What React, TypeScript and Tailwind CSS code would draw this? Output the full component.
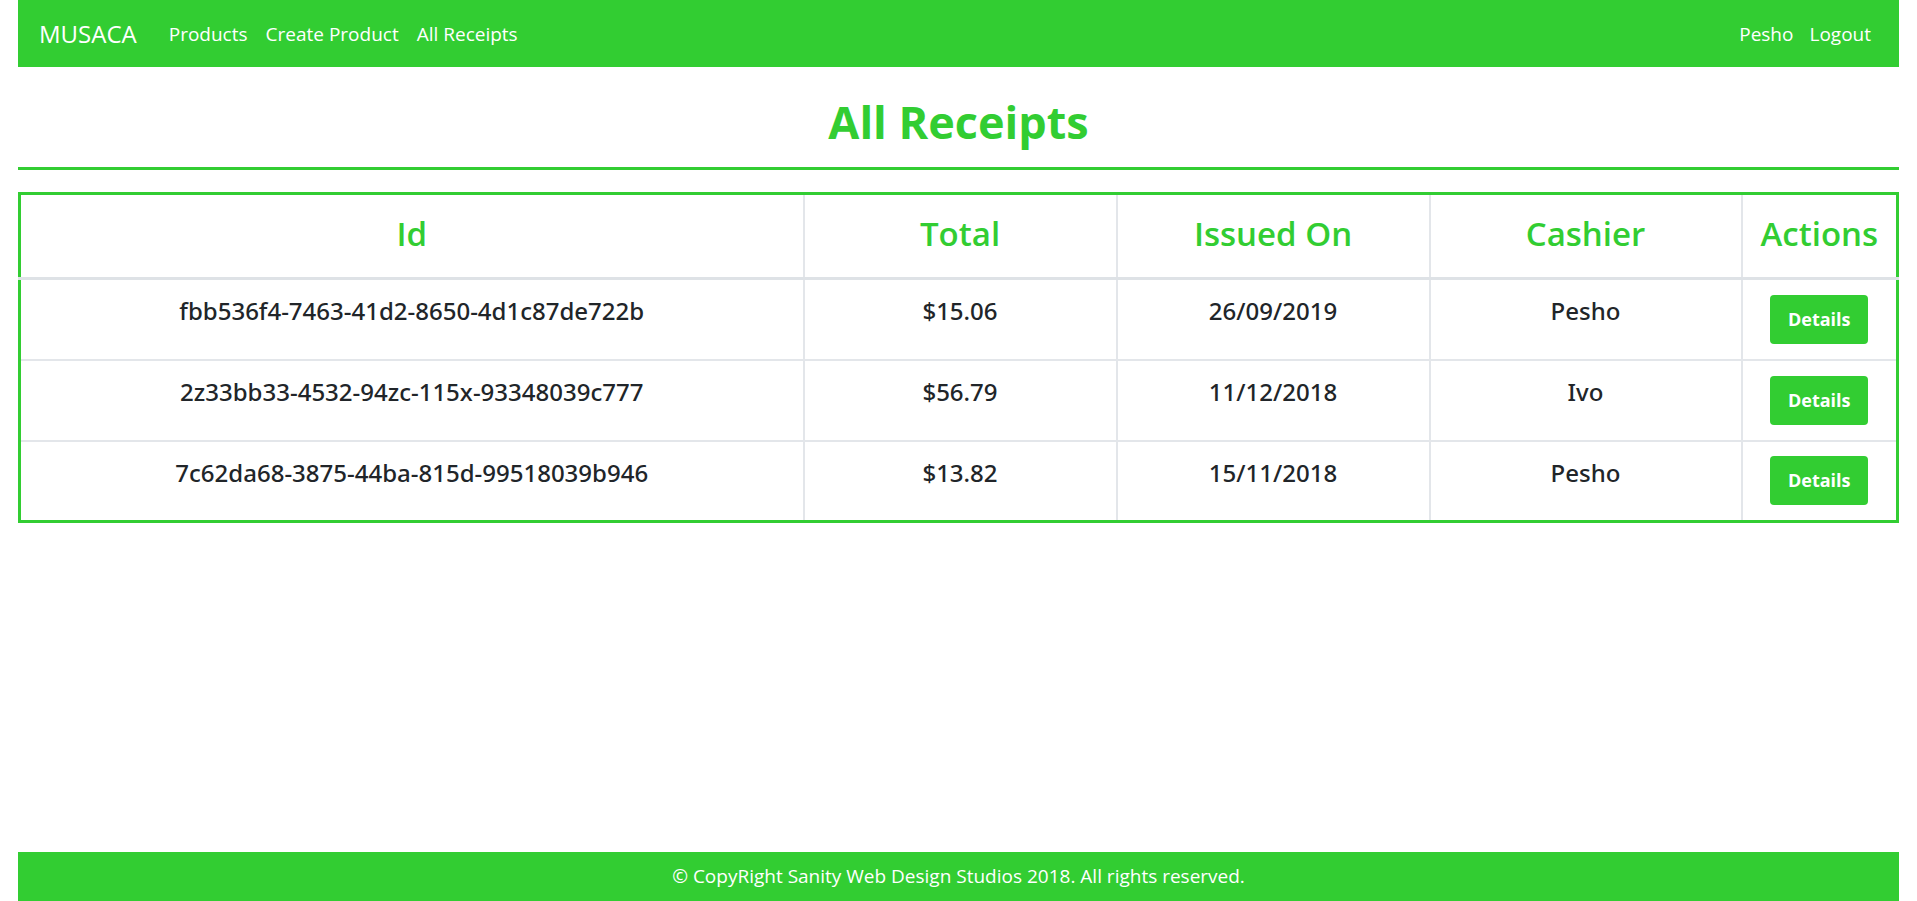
const receipts = [
  { id: "fbb536f4-7463-41d2-8650-4d1c87de722b", total: "$15.06", issuedOn: "26/09/2019", cashier: "Pesho" },
  { id: "2z33bb33-4532-94zc-115x-93348039c777", total: "$56.79", issuedOn: "11/12/2018", cashier: "Ivo" },
  { id: "7c62da68-3875-44ba-815d-99518039b946", total: "$13.82", issuedOn: "15/11/2018", cashier: "Pesho" },
];

function Navbar() {
  return (
    <nav className="h-[67px] bg-[#32cd32] flex items-center justify-between pl-[21px] pr-5 text-white">
      <div className="flex items-center pt-px">
        <a className="text-[24px] mr-[23px]">MUSACA</a>
        <a className="px-[9px] text-[19px]">Products</a>
        <a className="px-[9px] text-[19px]">Create Product</a>
        <a className="px-[9px] text-[19px]">All Receipts</a>
      </div>
      <div className="flex items-center pt-px">
        <a className="px-2 text-[19px]">Pesho</a>
        <a className="px-2 text-[19px]">Logout</a>
      </div>
    </nav>
  );
}

const cell = "text-center text-[24px] font-medium text-[#212529] pb-4 font-['Noto_Sans',sans-serif]";

export default function App() {
  return (
    <div
      className="min-h-screen flex flex-col pl-[18px] pr-[18px] bg-white"
      style={{ fontFamily: '"Open Sans", "Noto Sans", sans-serif' }}
    >
      <Navbar />
      <main className="flex-1">
        <h1 className="pt-[28px] pb-[18px] text-center text-[45px] leading-[54px] font-bold text-[#32cd32]">
          All Receipts
        </h1>
        <hr className="border-0 h-[3px] bg-[#32cd32]" />
        <table className="mt-[22px] w-full table-fixed border-collapse border-[3px] border-[#32cd32]">
          <thead>
            <tr className="h-[85px] border-b-[3px] border-[#dee2e6]">
              <th className="w-[784px] text-[33px] font-semibold text-[#32cd32] pb-1">Id</th>
              <th className="w-[313px] text-[33px] font-semibold text-[#32cd32] pb-1 border-l-2 border-[#e3e6ea]">Total</th>
              <th className="w-[313px] text-[33px] font-semibold text-[#32cd32] pb-1 border-l-2 border-[#e3e6ea]">Issued On</th>
              <th className="w-[312px] text-[33px] font-semibold text-[#32cd32] pb-1 border-l-2 border-[#e3e6ea]">Cashier</th>
              <th className="text-[33px] font-semibold text-[#32cd32] pb-1 border-l-2 border-[#e3e6ea]">Actions</th>
            </tr>
          </thead>
          <tbody>
            {receipts.map((r) => (
              <tr key={r.id} className="h-[81px] border-t-2 border-[#e3e6ea] first:border-t-0">
                <td className={cell}>{r.id}</td>
                <td className={`${cell} border-l-2 border-[#e3e6ea]`}>{r.total}</td>
                <td className={`${cell} border-l-2 border-[#e3e6ea]`}>{r.issuedOn}</td>
                <td className={`${cell} border-l-2 border-[#e3e6ea]`}>{r.cashier}</td>
                <td className="text-center border-l-2 border-[#e3e6ea]">
                  <button className="w-[98px] h-[49px] rounded bg-[#32cd32] text-white text-[18px] font-bold">
                    Details
                  </button>
                </td>
              </tr>
            ))}
          </tbody>
        </table>
      </main>
      <footer className="h-[49px] bg-[#32cd32] flex items-center justify-center text-white text-[19px]">
        © CopyRight Sanity Web Design Studios 2018. All rights reserved.
      </footer>
    </div>
  );
}
